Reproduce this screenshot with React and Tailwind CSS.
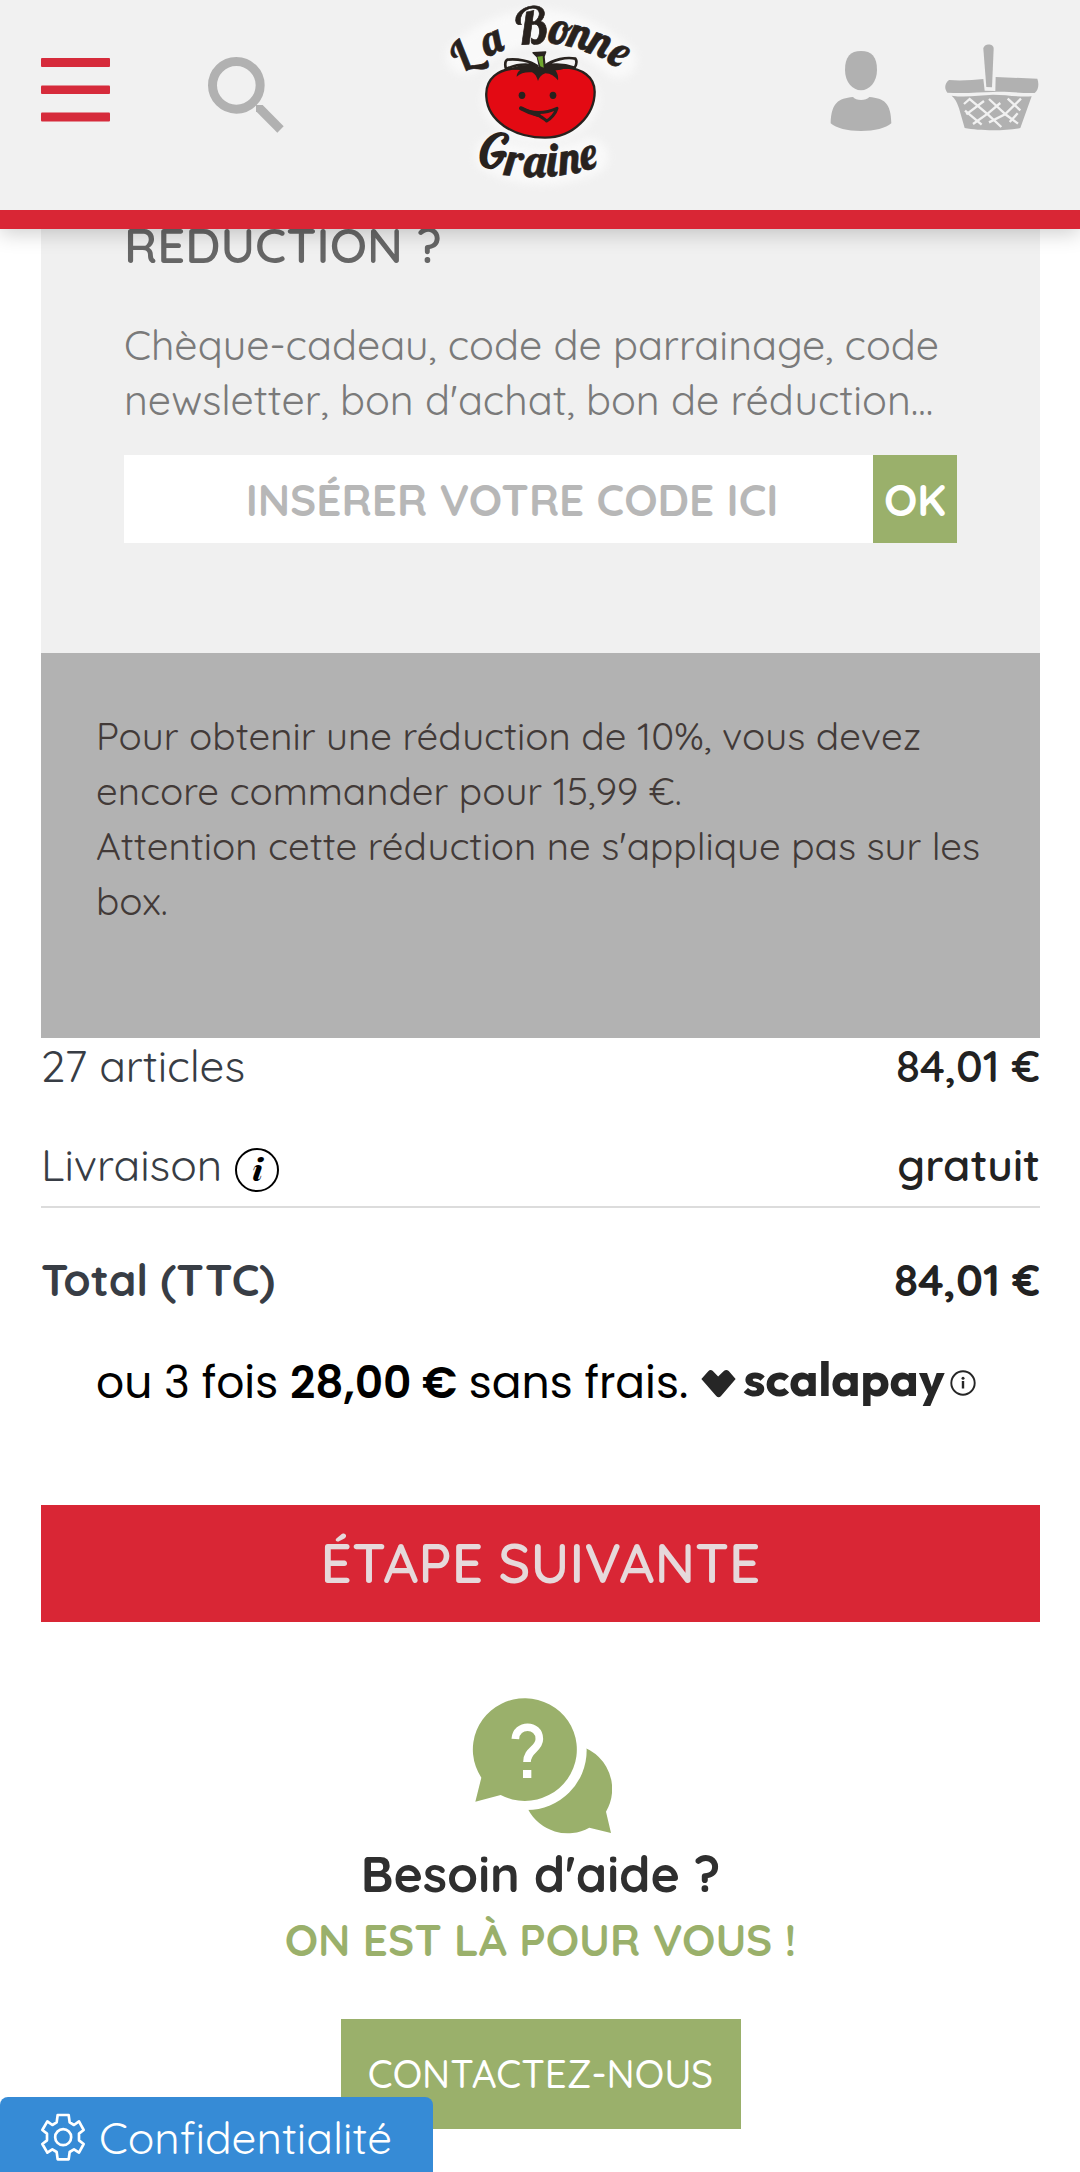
import React from "react";

const INK = "#28221e";

function MenuIcon() {
  return (
    <svg className="mt-[57px] ml-[41px] h-[65px] w-[69px]" viewBox="0 0 69 65" fill="#d62b3b">
      <rect x="0" y="1" width="69" height="9" rx="1" />
      <rect x="0" y="28.5" width="69" height="8.5" rx="1" />
      <rect x="0" y="55.5" width="69" height="9" rx="1" />
    </svg>
  );
}

function SearchIcon() {
  return (
    <svg className="mt-[56px] ml-[98px] h-[78px] w-[77px]" viewBox="624 168 231 234">
      <circle cx="709" cy="256" r="71.5" fill="none" stroke="#b1b1b1" strokeWidth="27" />
      <path d="M768 315H788L851 379L832 398L768 334Z" fill="#b1b1b1" />
    </svg>
  );
}

// [letter, x, baseline y, rotation, size]
const topLetters = [
  ["L", 98, 217, -34, 122],
  ["a", 173, 172, -24, 128],
  ["B", 260, 135, -4, 152],
  ["o", 355, 130, 7, 138],
  ["n", 410, 138, 13, 134],
  ["n", 468, 157, 20, 134],
  ["e", 528, 186, 27, 134],
  ["r", 224, 525, 5, 138],
  ["a", 283, 531, 1, 138],
  ["i", 354, 530, -3, 138],
  ["n", 394, 526, -8, 136],
  ["e", 461, 513, -14, 136],
];

function Logo() {
  return (
    <svg className="ml-[145px] h-[200px] w-[220px]" viewBox="0 0 660 600">
      <defs>
        <filter id="halo" x="-20%" y="-20%" width="140%" height="140%">
          <feGaussianBlur stdDeviation="12" />
        </filter>
      </defs>
      <g filter="url(#halo)" fill="#fff" opacity="0.6" aria-hidden="true">
        <ellipse cx="331" cy="300" rx="175" ry="125" />
        <path d="M105 170Q330 -10 565 180M190 465Q330 530 480 470" fill="none" stroke="#fff" strokeWidth="110" strokeLinecap="round" />
      </g>
      <path
        d="M169 290C165 235 205 207 262 205C300 214 370 212 405 202C455 205 494 230 494 275C494 345 430 413 345 413C250 413 173 362 169 290Z"
        fill="#e30a13"
        stroke={INK}
        strokeWidth="7"
      />
      <path d="M228 207C224 192 225 183 232 179C262 176 300 182 322 198C290 190 255 194 228 207Z" fill="#f4f4f4" stroke={INK} strokeWidth="8" strokeLinejoin="round" />
      <path d="M344 198C370 178 410 170 436 176C442 184 440 193 434 203C405 193 370 192 344 198Z" fill="#f4f4f4" stroke={INK} strokeWidth="8" strokeLinejoin="round" />
      <path
        d="M232 210C270 192 300 192 326 200C360 190 405 194 430 204C410 207 392 208 374 208C382 218 386 228 384 241C374 228 362 221 346 220C334 224 328 232 324 243C320 230 316 222 306 217C288 215 272 219 260 230C260 220 264 214 272 209C258 208 245 208 232 210Z"
        fill={INK}
      />
      <path d="M309 158L347 156L342 170L346 206L330 208L322 171Z" fill={INK} stroke={INK} strokeWidth="4" strokeLinejoin="round" />
      <path d="M322 170L338 168L341 203L331 199Z" fill="#6fa62e" />
      <ellipse cx="276" cy="286" rx="10" ry="11" fill={INK} />
      <ellipse cx="369" cy="286" rx="10" ry="11" fill={INK} />
      <path d="M273 325C305 340 345 341 381 325C377 340 362 356 350 363C336 352 330 344 310 341" fill="none" stroke={INK} strokeWidth="9" strokeLinecap="round" strokeLinejoin="round" />
      <path d="M273 325C290 335 306 341 326 345" fill="none" stroke={INK} strokeWidth="12" strokeLinecap="round" />
      <g fill={INK} stroke={INK} strokeWidth="2" className="[font-family:Lobster,'Liberation_Serif',cursive]">
        {topLetters.map(([ch, x, y, r, s], i) => (
          <text key={i} fontSize={s} transform={`translate(${x} ${y}) rotate(${r})`}>
            {ch}
          </text>
        ))}
        <text
          fontSize="132"
          strokeWidth="6"
          transform="translate(131 491) rotate(4)"
          className="[font-family:'Kaushan_Script','Liberation_Serif',cursive]"
        >
          G
        </text>
      </g>
    </svg>
  );
}

function UserIcon() {
  return (
    <svg className="mt-[50px] ml-[180px] h-[82px] w-[62px]" viewBox="150 150 186 246" fill="#b1b1b1">
      <path d="M243 153C275 153 291 170 291 210C291 246 268 271 243 271C218 271 195 246 195 210C195 170 211 153 243 153Z" />
      <path d="M219 291C227 303 259 303 268 291C312 295 333 308 334 370C317 385 285 393 243 393C201 393 169 385 152 370C154 308 175 295 219 291Z" />
    </svg>
  );
}

function BasketIcon() {
  return (
    <svg className="mt-[43px] ml-[51px] h-[89px] w-[97px]" viewBox="490 129 291 267" fill="#b1b1b1">
      <path d="M508 240C545 243 580 240 611 237L615 272L647 273L648 231L773 236C778 250 778 268 765 279C720 280 690 274 640 276C600 277 550 281 503 278C493 266 495 250 508 240Z" />
      <path d="M615 235H645V268H618Z" fill="#f1f1f1" />
      <path d="M611 146C612 130 642 128 642 146L637 262L620 261Z" />
      <path d="M516 287C560 294 600 285 640 284C680 284 720 292 756 289L722 384C680 393 600 393 555 384L538 325C532 306 526 296 516 287Z" />
      <g fill="none" stroke="#f1f1f1" strokeWidth="7">
        <path d="M553 312L570 297L622 341L665 381" />
        <path d="M628 297L680 345L715 371" />
        <path d="M684 296L722 331" />
        <path d="M556 332L606 374" />
        <path d="M613 303L560 343M662 309L625 340L580 372M724 296L676 343L628 367M714 340L690 366" />
      </g>
    </svg>
  );
}

function ChatIcon() {
  return (
    <svg className="mt-[76px] ml-[2px] h-[137px] w-[140px]" viewBox="570 621 420 411">
      <g fill="#9ab06b">
        <path d="M856 760A134 134 0 0 1 972 962L987 1026L922 1010A134 134 0 0 1 738 955L800 800Z" />
        <circle cx="735" cy="778" r="179" fill="#fff" />
        <path d="M598 860A156 154 0 1 1 656 912L580 932Z" />
      </g>
      <path d="M700 744C702 697 772 697 772 744C772 775 735 776 735 813" fill="none" stroke="#fff" strokeWidth="23" />
      <rect x="723" y="837" width="25" height="24" fill="#fff" />
    </svg>
  );
}

function GearIcon() {
  return (
    <svg className="h-[48px] w-[46px]" viewBox="120 340 138 144" fill="none" stroke="#fff" strokeWidth="8" strokeLinejoin="round">
      <path d="M173 346H206L209 368L222 376L237 365L251 391L237 402V422L251 433L237 459L222 449L209 457L206 479H173L170 457L157 449L142 459L127 433L141 422V402L127 391L142 365L157 376L170 368Z" />
      <circle cx="189.500" cy="412.500" r="24" />
    </svg>
  );
}

export default function App() {
  return (
    <div className="relative h-[2172px] w-[1080px] overflow-hidden bg-white [font-family:Quicksand,Inter,sans-serif]">
      <header className="relative z-10 flex h-[229px] items-start border-b-[19px] border-[#d92635] bg-[#f1f1f1] shadow-[0_4px_20px_rgba(0,0,0,0.2)]">
        <MenuIcon />
        <SearchIcon />
        <Logo />
        <UserIcon />
        <BasketIcon />
      </header>

      <main className="-mt-[60px] pr-[40px] pl-[41px]">
        <section className="bg-[#f0f0f0] px-[83px] pt-[46px] pb-[110px]">
          <h2 className="text-[49px] leading-[60px] font-semibold text-[#666]">RÉDUCTION ?</h2>
          <p className="mt-[42px] text-[41.25px] leading-[55px] font-normal whitespace-nowrap text-[#7a7a7a]">
            Chèque-cadeau, code de parrainage, code
            <br />
            newsletter, bon d'achat, bon de réduction...
          </p>
          <div className="mt-[28px] flex h-[88px] text-[44px] font-bold">
            <div className="flex flex-1 items-center justify-center bg-white pt-[2px] pl-[27px] whitespace-nowrap text-[#b7b7b7]">
              INSÉRER VOTRE CODE ICI
            </div>
            <button className="w-[84px] bg-[#9ab06b] pt-[2px] text-center text-white">OK</button>
          </div>
        </section>

        <section className="h-[385px] bg-[#b2b2b2] px-[55px] pt-[55px] text-[38.5px] leading-[55px] whitespace-nowrap text-[#423a38]">
          Pour obtenir une réduction de 10%, vous devez
          <br />
          encore commander pour 15,99 €.
          <br />
          Attention cette réduction ne s'applique pas sur les
          <br />
          box.
        </section>

        <section className="text-[44px] leading-[55px] text-[#383d45]">
          <div className="flex justify-between">
            <span>27 articles</span>
            <span className="font-semibold text-[#222]">84,01 €</span>
          </div>
          <div className="mt-[44px] flex h-[71px] justify-between border-b-2 border-[#dcdcdc]">
            <div className="flex items-start gap-[13px]">
              <span>Livraison</span>
              <svg className="mt-[11px] h-[44px] w-[44px]" viewBox="0 0 44 44">
                <circle cx="22" cy="22" r="21" fill="none" stroke="#000" strokeWidth="2" />
                <text x="22.500" y="32.500" textAnchor="middle" fontSize="30" className="font-black italic [font-family:'Playfair_Display','Liberation_Serif',serif]">
                  i
                </text>
              </svg>
            </div>
            <span className="font-semibold text-[#222]">gratuit</span>
          </div>
          <div className="mt-[44px] flex justify-between font-bold">
            <span>Total (TTC)</span>
            <span className="text-[#222]">84,01 €</span>
          </div>
        </section>

        <div className="mt-[43px] ml-[55px] flex h-[66px] items-start leading-[66px] whitespace-nowrap">
          <p className="text-[44px] text-black [font-family:Poppins,Inter,sans-serif]">
            ou 3 fois <b className="font-semibold">28,00 €</b> sans frais.
          </p>
          <svg className="mt-[19px] ml-[13px] h-[29px] w-[35px]" viewBox="426 688 106 88" fill="#262626">
            <path d="M427 718L448 695Q454 688 461 693L478 711L496 693Q503 688 510 694L531 718L486 771Q479 777 472 770Z" />
          </svg>
          <span className="-mt-[5px] ml-[7px] text-[49px] font-bold text-[#262626] [font-family:Outfit,Poppins,sans-serif]">scalapay</span>
          <svg className="mt-[20px] ml-[5px] h-[26px] w-[26px]" viewBox="0 0 26 26" fill="#262626">
            <circle cx="13" cy="13" r="11.700" fill="none" stroke="#262626" strokeWidth="1.900" />
            <circle cx="13" cy="8.300" r="1.500" />
            <rect x="11.800" y="11" width="2.400" height="7.500" />
          </svg>
        </div>

        <button className="mt-[89px] flex h-[117px] w-full items-center justify-center bg-[#d92635] text-[55px] font-semibold text-[#e6d9db]">
          ÉTAPE SUIVANTE
        </button>

        <section className="flex flex-col items-center">
          <ChatIcon />
          <h3 className="mt-[9px] text-[50px] leading-[60px] font-bold text-[#2f2f2f]">Besoin d'aide ?</h3>
          <p className="mt-[8px] text-[44px] leading-[55px] font-bold text-[#9ab06b]">ON EST LÀ POUR VOUS !</p>
          <button className="mt-[52px] h-[110px] w-[400px] bg-[#9ab06b] text-[38.5px] font-medium text-white">CONTACTEZ-NOUS</button>
        </section>
      </main>

      <button className="absolute bottom-0 left-0 flex h-[75px] w-[433px] items-start rounded-t-[8px] bg-[#368bd6] pl-[40px] text-[44px] leading-[55px] text-white">
        <span className="mt-[16px]">
          <GearIcon />
        </span>
        <span className="mt-[13px] ml-[13px]">Confidentialité</span>
      </button>
    </div>
  );
}
